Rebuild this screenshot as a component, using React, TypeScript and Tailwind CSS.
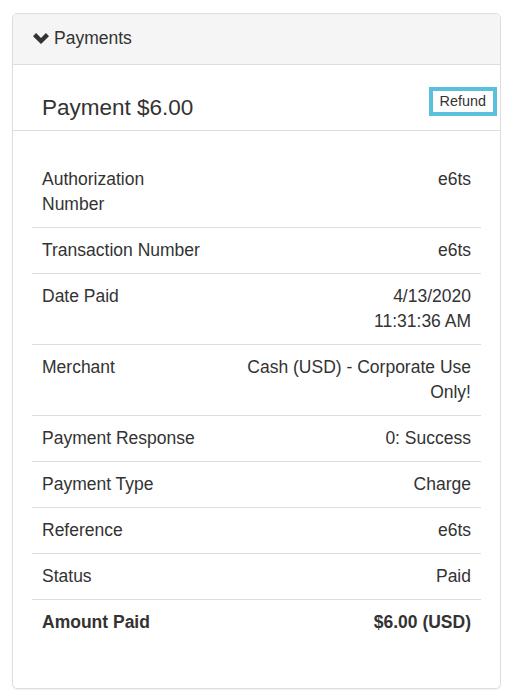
const rows: { label: string; value: string[]; bold?: boolean }[] = [
  { label: 'Authorization Number', value: ['e6ts'] },
  { label: 'Transaction Number', value: ['e6ts'] },
  { label: 'Date Paid', value: ['4/13/2020', '11:31:36 AM'] },
  { label: 'Merchant', value: ['Cash (USD) - Corporate Use Only!'] },
  { label: 'Payment Response', value: ['0: Success'] },
  { label: 'Payment Type', value: ['Charge'] },
  { label: 'Reference', value: ['e6ts'] },
  { label: 'Status', value: ['Paid'] },
  { label: 'Amount Paid', value: ['$6.00 (USD)'], bold: true },
];

function Chevron() {
  return (
    <svg width="16" height="11" viewBox="0 0 16 11" className="shrink-0">
      <polygon points="0,3.2 3.1,0.1 8,5 12.9,0.1 16,3.2 8,11" fill="#333" />
    </svg>
  );
}

export default function App() {
  return (
    <div className="min-h-screen bg-white pt-[13px] pl-[12px] pr-[13px] text-[#333] font-['Liberation_Sans',Arial,sans-serif]">
      <div className="w-[489px] border border-[#ddd] rounded-[5px] shadow-[0_1px_1px_rgba(0,0,0,0.05)] overflow-hidden">
        {/* panel heading */}
        <div className="flex items-center gap-[5px] bg-[#f5f5f5] border-b border-[#ddd] px-[20px] pt-[12px] pb-[13px] text-[17.5px] leading-[25px]">
          <Chevron />
          <span>Payments</span>
        </div>

        {/* payment title */}
        <div className="flex items-start justify-between border-b border-[#ddd] pl-[29px] pr-[3px] pt-[22px] h-[66px]">
          <h4 className="text-[22.5px] leading-[25px] mt-[8px]">Payment $6.00</h4>
          <button className="border-[4px] border-[#5bc0de] bg-white px-[7px] h-[29px] text-[14.4px] leading-[20px] pb-[1px] text-[#333]">
            Refund
          </button>
        </div>

        {/* details */}
        <div className="px-[19px] pt-[26px] pb-[43px]">
          <table className="w-full border-collapse text-[17.5px] leading-[25px]">
            <tbody>
              {rows.map((r, i) => (
                <tr key={r.label} className={i > 0 ? 'border-t border-[#ddd]' : ''}>
                  <td className={`w-[40%] align-top px-[10px] py-[10px] ${r.bold ? 'font-bold' : ''}`}>
                    {r.label}
                  </td>
                  <td className={`align-top text-right px-[10px] py-[10px] ${r.bold ? 'font-bold' : ''}`}>
                    {r.value.map((v) => (
                      <div key={v}>{v}</div>
                    ))}
                  </td>
                </tr>
              ))}
            </tbody>
          </table>
        </div>
      </div>
    </div>
  );
}
